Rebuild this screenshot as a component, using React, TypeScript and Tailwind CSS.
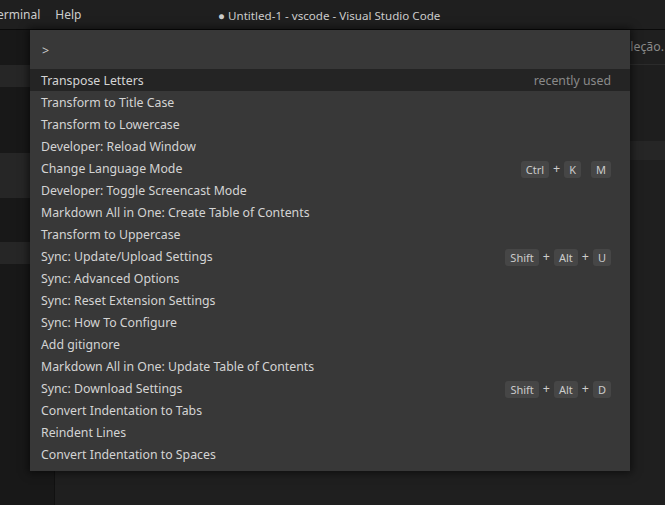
import React from "react";

type Cmd = { label: string; keys?: string[][]; note?: string };

const commands: Cmd[] = [
    { label: "Transpose Letters", note: "recently used" },
    { label: "Transform to Title Case" },
    { label: "Transform to Lowercase" },
    { label: "Developer: Reload Window" },
    { label: "Change Language Mode", keys: [["Ctrl", "K"], ["M"]] },
    { label: "Developer: Toggle Screencast Mode" },
    { label: "Markdown All in One: Create Table of Contents" },
    { label: "Transform to Uppercase" },
    { label: "Sync: Update/Upload Settings", keys: [["Shift", "Alt", "U"]] },
    { label: "Sync: Advanced Options" },
    { label: "Sync: Reset Extension Settings" },
    { label: "Sync: How To Configure" },
    { label: "Add gitignore" },
    { label: "Markdown All in One: Update Table of Contents" },
    { label: "Sync: Download Settings", keys: [["Shift", "Alt", "D"]] },
    { label: "Convert Indentation to Tabs" },
    { label: "Reindent Lines" },
    { label: "Convert Indentation to Spaces" },
];

function Keys({ chords }: { chords: string[][] }) {
    return (
        <div className="flex items-center gap-[10px]">
            {chords.map((chord, i) => (
                <div key={i} className="flex items-center gap-[4px]">
                    {chord.map((k, j) => (
                        <React.Fragment key={j}>
                            {j > 0 && <span className="text-[12.5px] text-[#cccccc]">+</span>}
                            <span className="rounded-[3px] bg-[#464646] px-[5px] h-[17px] leading-[17px] text-[11px] text-[#cccccc]">
                                {k}
                            </span>
                        </React.Fragment>
                    ))}
                </div>
            ))}
        </div>
    );
}

export default function App() {
    const font = { fontFamily: '"Noto Sans", "Open Sans", sans-serif' };

    return (
        <div style={font} className="w-[665px] h-[505px] bg-[#1e1e1e] flex flex-col overflow-hidden relative text-[#cccccc]">
            {/* title bar */}
            <div className="h-[30px] shrink-0 bg-[#1f1f1f] border-b border-[#0a0a0a] flex items-center text-[12px] relative">
                <span className="ml-[-3px]">erminal</span>
                <span className="ml-[15px]">Help</span>
                <span className="absolute left-[218px] top-[7px] text-[11.6px]">● Untitled-1 - vscode - Visual Studio Code</span>
            </div>

            <div className="flex flex-1">
                {/* sidebar */}
                <div className="w-[55px] shrink-0 bg-[#181818] border-r border-[#111] flex flex-col">
                    <div className="h-[35px]" />
                    <div className="h-[22px] bg-[#262626]" />
                    <div className="h-[66px]" />
                    <div className="h-[45px] bg-[#262626]" />
                    <div className="h-[44px]" />
                    <div className="h-[22px] bg-[#262626]" />
                </div>

                {/* editor */}
                <div className="flex-1 flex flex-col">
                    <div className="h-[35px] bg-[#1f1f1f] border-b border-[#2b2b2b] flex items-center justify-end text-[12.3px] text-[#8a8a8a]">
                        <span className="mr-[1px]">leção.</span>
                    </div>
                    <div className="h-[76px]" />
                    <div className="h-[19px] bg-[#262626]" />
                    <div className="flex-1 bg-[#1f1f1f]" />
                </div>
            </div>

            {/* command palette */}
            <div className="absolute left-[30px] top-[30px] w-[600px] bg-[#383838] shadow-[0_0_8px_2px_rgba(0,0,0,0.55)] pb-[6px]">
                <div className="h-[39px] flex items-center px-[12px] pt-[3px] text-[12.5px] text-[#cccccc]">
                    &gt;
                </div>
                <div className="flex flex-col">
                    {commands.map((c, i) => (
                        <div
                            key={c.label}
                            className={`h-[22px] flex items-center justify-between pl-[11px] pr-[19px] pt-[2px] text-[12.3px] ${i === 0 ? "bg-[#242424]" : ""}`}
                        >
                            <span className="text-[#d4d4d4]">{c.label}</span>
                            {c.note && <span className="text-[#8a8a8a]">{c.note}</span>}
                            {c.keys && <Keys chords={c.keys} />}
                        </div>
                    ))}
                </div>
            </div>
        </div>
    );
}
